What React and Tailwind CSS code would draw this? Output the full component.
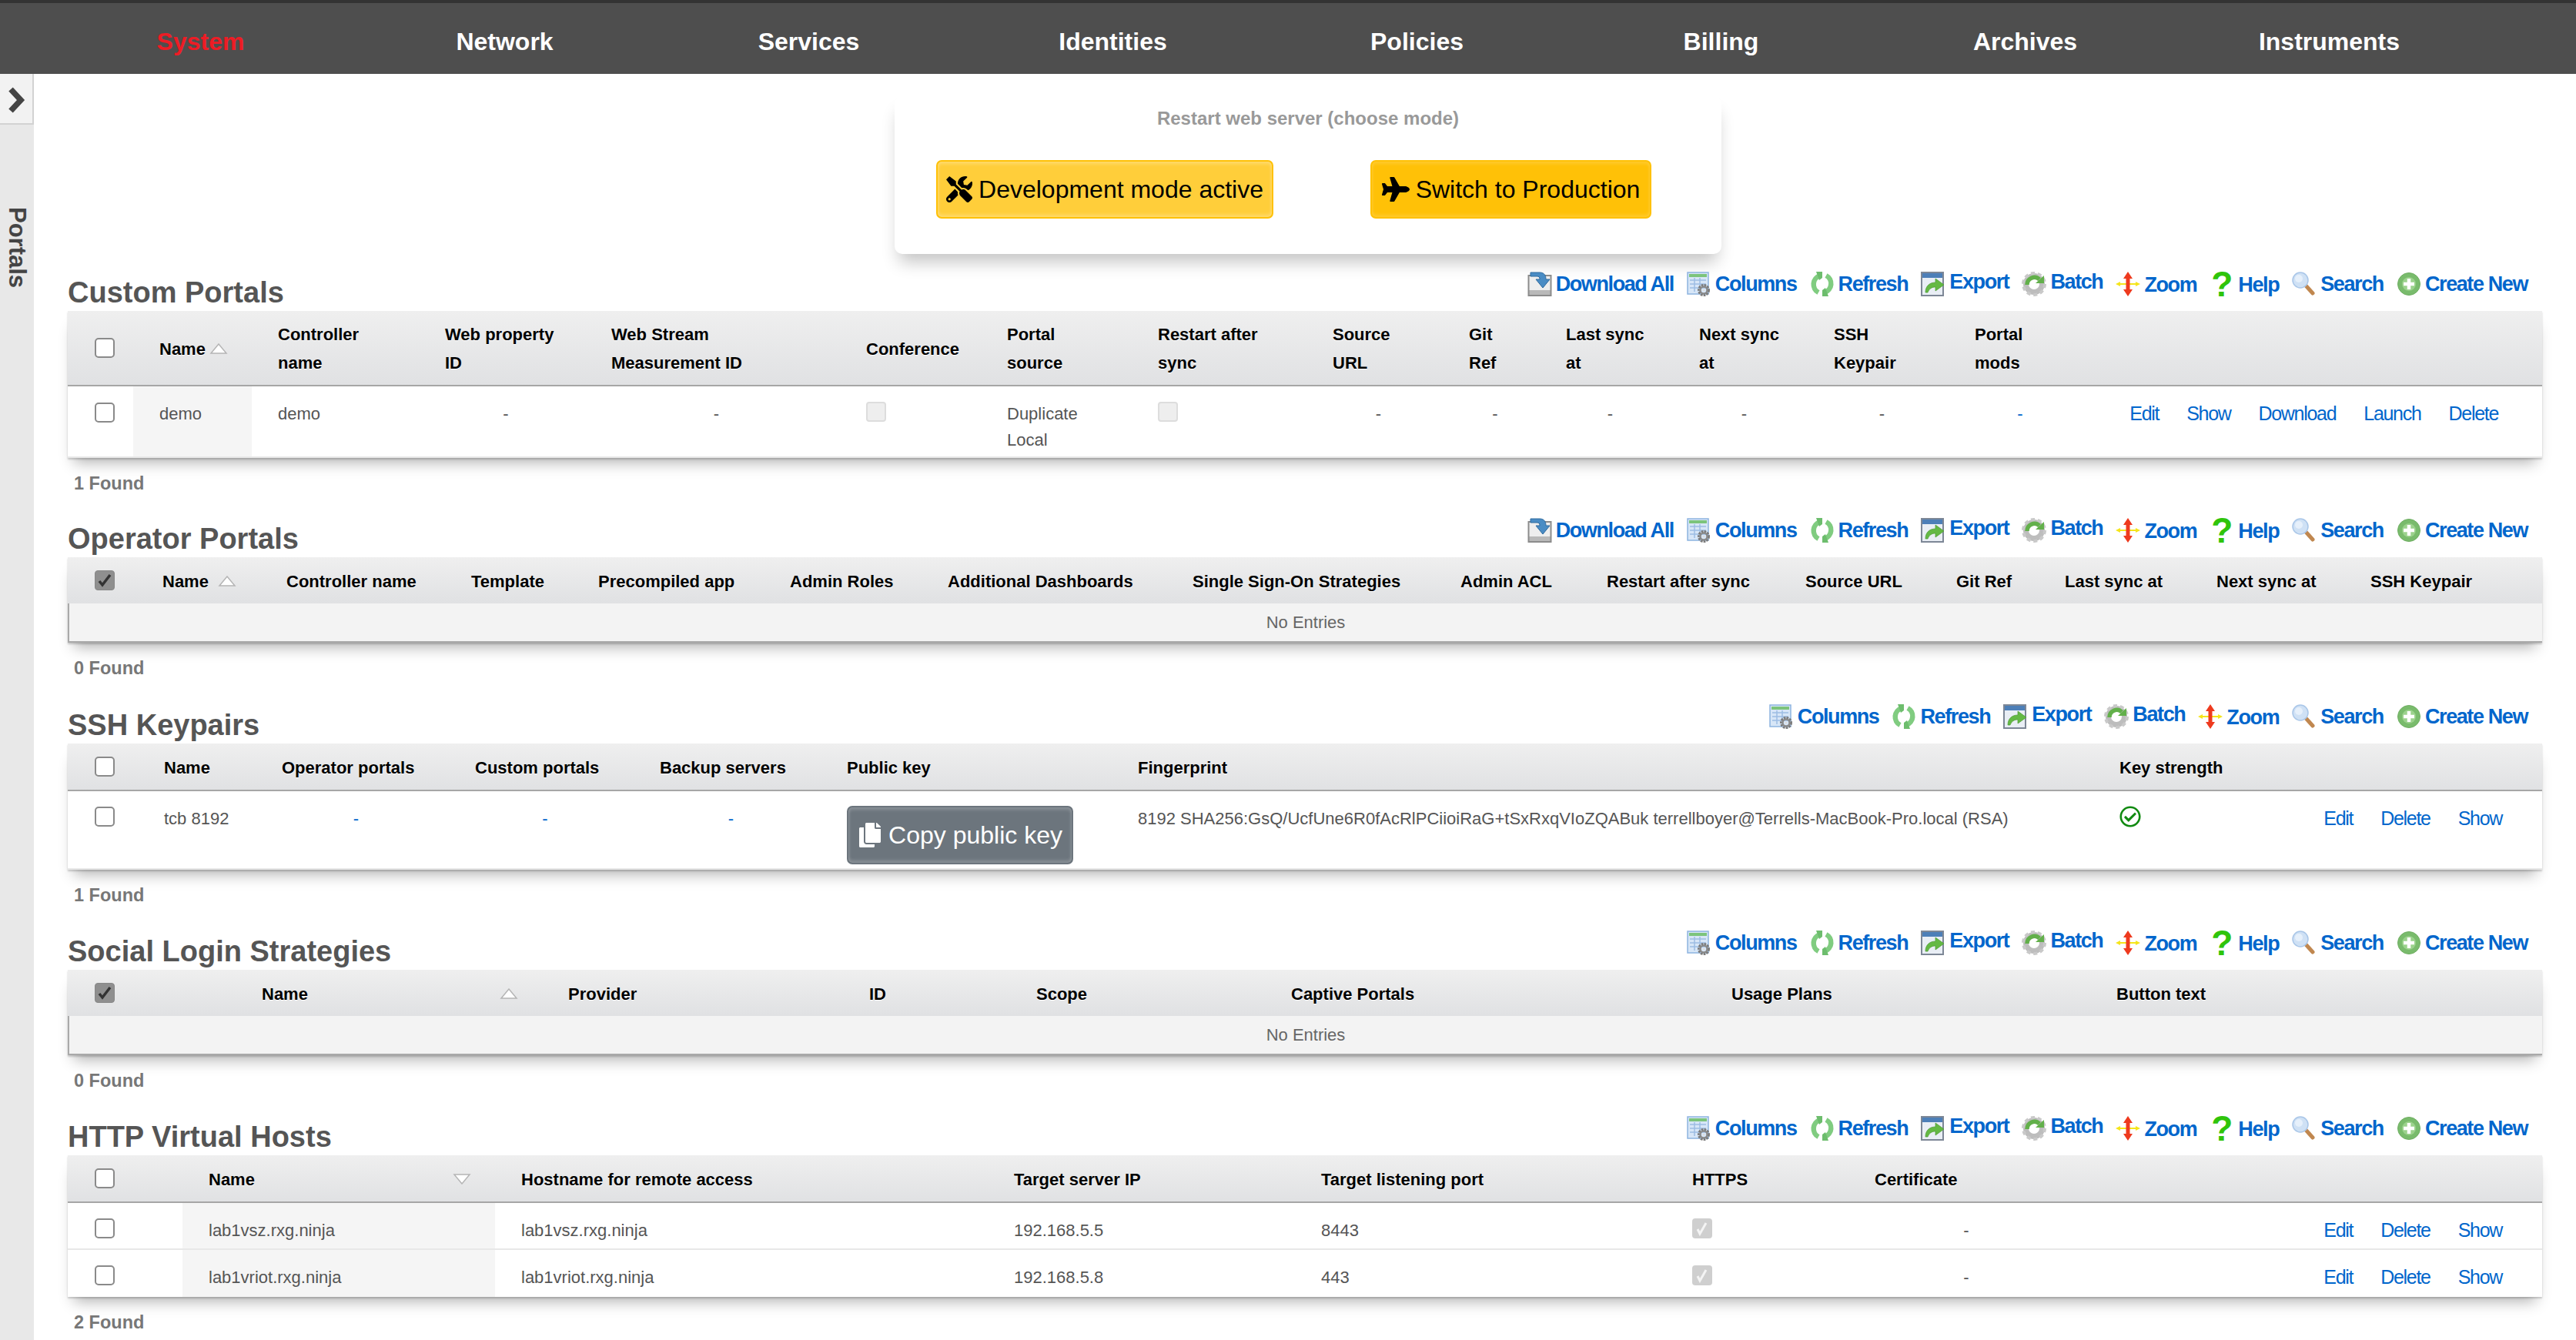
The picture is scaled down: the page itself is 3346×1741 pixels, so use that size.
import React from 'react';
import { FaTools, FaPlane, FaCopy, FaRegCheckCircle } from 'react-icons/fa';

const Svg = ({ children }) => (
  <svg viewBox="0 0 32 32" className="w-[32px] h-[32px] shrink-0 blur-[0.5px]">{children}</svg>
);

const icons = {
  download: (
    <Svg>
      <rect x="0.5" y="4" width="31" height="28" fill="#8c8c8c" />
      <rect x="2.5" y="6" width="27" height="18" fill="#eeeeee" />
      <rect x="2.5" y="24" width="27" height="6" fill="#b9b9b9" />
      <path d="M4 1h12c6 0 8 4 8 9h5l-9 11-9-11h5c0-3-1-4-4-4H4z" fill="#4a8cc4" stroke="#2f6a9e" strokeWidth="1" />
    </Svg>
  ),
  columns: (
    <Svg>
      <rect x="1" y="1" width="27" height="28" fill="#d7e6f7" stroke="#8db4e0" strokeWidth="1.5" />
      <rect x="3" y="3" width="23" height="4" fill="#7cc47c" />
      <path d="M4 11h21M4 16h21M4 21h21M10 8v18M17 8v18" stroke="#9dbde4" strokeWidth="1.5" />
      <circle cx="22" cy="24" r="6" fill="none" stroke="#7a7a7a" strokeWidth="4" strokeDasharray="2.5 1" />
      <circle cx="22" cy="24" r="4.5" fill="none" stroke="#8a8a8a" strokeWidth="2.5" />
      <circle cx="22" cy="24" r="1.5" fill="#dddddd" />
    </Svg>
  ),
  refresh: (
    <Svg>
      <path d="M13 5A12 12 0 0 0 11 27" fill="none" stroke="#80cc80" strokeWidth="6.500" />
      <path d="M19 27A12 12 0 0 0 21 5" fill="none" stroke="#80cc80" strokeWidth="6.500" />
      <path d="M8 0h8v8l-4 3z" fill="#6dbd6d" />
      <path d="M24 32h-8v-8l4-3z" fill="#6dbd6d" />
    </Svg>
  ),
  export: (
    <Svg>
      <rect x="1" y="1" width="28" height="30" fill="#e9eef5" stroke="#7d8796" strokeWidth="2" />
      <rect x="2" y="2" width="26" height="6" fill="#4d7fb8" />
      <path d="M6 27c0-9 6-13 13-13V9l11 8-11 8v-5c-5 0-8 2-10 7z" fill="#64b944" stroke="#4c9a32" strokeWidth="0.7" />
    </Svg>
  ),
  batch: (
    <Svg>
      <circle cx="16" cy="16" r="10.500" fill="none" stroke="#bdbdbd" strokeWidth="7" />
      <circle cx="16" cy="16" r="14" fill="none" stroke="#c9c9c9" strokeWidth="4" strokeDasharray="5 3.800" />
      <path d="M7 17A9.500 9.500 0 0 1 23 10" fill="none" stroke="#62b04a" strokeWidth="5.500" />
      <path d="M18 15h11V5z" fill="#62b04a" />
    </Svg>
  ),
  zoom: (
    <Svg>
      <path d="M0 16l6-3v2h20v-2l6 3-6 3v-2H6v2z" fill="#f5e51b" />
      <path d="M16 0l6 9h-3.500v14H22l-6 9-6-9h3.500V9H10z" fill="#ee3a1e" />
    </Svg>
  ),
  search: (
    <Svg>
      <path d="M18 18l9 10" stroke="#c0874f" strokeWidth="5" strokeLinecap="round" />
      <circle cx="11" cy="11" r="10" fill="#cfe1f5" stroke="#a9c6e8" strokeWidth="1.5" />
      <circle cx="9" cy="9" r="5" fill="#e6f0fb" />
    </Svg>
  ),
  create: (
    <Svg>
      <circle cx="16" cy="16" r="14.500" fill="#79bb6c" stroke="#6fae62" strokeWidth="1" />
      <circle cx="16" cy="16" r="9" fill="#9bd28c" />
      <path d="M16 9v14M9 16h14" stroke="#ffffff" strokeWidth="4.500" />
    </Svg>
  ),
  help: null,
};

const toolLabels = {
  download: 'Download All',
  columns: 'Columns',
  refresh: 'Refresh',
  export: 'Export',
  batch: 'Batch',
  zoom: 'Zoom',
  help: 'Help',
  search: 'Search',
  create: 'Create New',
};

const textShift = {
  export: 'mb-[5px]',
  batch: 'mb-[5px]',
  zoom: 'mt-[2px]',
  help: 'mt-[3px]',
};

function Toolbar({ items }) {
  return (
    <div className="flex items-center gap-[17px] pr-[19px] mb-[17px] text-[27px] font-bold tracking-[-1.4px] text-[#0066cc] leading-[32px]">
      {items.map((k) => (
        <span key={k} className="flex items-center gap-[5px] whitespace-nowrap">
          {k === 'help' ? (
            <span className="w-[32px] h-[32px] flex items-center justify-center text-[46px] leading-[32px] text-[#2fc40b] tracking-normal">?</span>
          ) : (
            icons[k]
          )}
          <span className={textShift[k] || ''}>{toolLabels[k]}</span>
        </span>
      ))}
    </div>
  );
}

const full = ['download', 'columns', 'refresh', 'export', 'batch', 'zoom', 'help', 'search', 'create'];
const noDownload = ['columns', 'refresh', 'export', 'batch', 'zoom', 'help', 'search', 'create'];
const sshTools = ['columns', 'refresh', 'export', 'batch', 'zoom', 'search', 'create'];

function Check({ kind }) {
  if (kind === 'checked') {
    return (
      <span className="flex items-center justify-center w-[26px] h-[26px] rounded-[4px] bg-[#8f8f8f] border border-[#888888]">
        <svg viewBox="0 0 20 20" className="w-[20px] h-[20px]">
          <path d="M3 11l4 5 10-13" fill="none" stroke="#333333" strokeWidth="3.500" />
        </svg>
      </span>
    );
  }
  if (kind === 'dis') {
    return <span className="block w-[26px] h-[26px] rounded-[4px] bg-[#eeeeee] border-2 border-[#dddddd]" />;
  }
  if (kind === 'disChecked') {
    return (
      <span className="flex items-center justify-center w-[26px] h-[26px] rounded-[4px] bg-[#cfcfcf]">
        <svg viewBox="0 0 20 20" className="w-[20px] h-[20px]">
          <path d="M4 11l3 6 8-14" fill="none" stroke="#f4f4f4" strokeWidth="3" />
        </svg>
      </span>
    );
  }
  return <span className="block w-[26px] h-[26px] rounded-[5px] bg-white border-2 border-[#8a8a8a]" />;
}

function Tri({ down }) {
  return (
    <svg viewBox="0 0 24 14" className="w-[24px] h-[14px] shrink-0">
      <path d={down ? 'M2 1h20L12 13z' : 'M12 1l10 12H2z'} fill="#ffffff" stroke="#b5b5b5" strokeWidth="1.500" />
    </svg>
  );
}

function Th({ children, sort, rule, first }) {
  const content = sort ? (
    <div className="flex items-center justify-between pr-[31px]">
      <span>{children}</span>
      <Tri down={sort === 'down'} />
    </div>
  ) : (
    children
  );
  return (
    <th
      className={
        'text-left align-middle font-bold text-[22px] leading-[37px] text-black [text-shadow:0_1px_0_#ffffff] ' +
        (first ? 'pl-[35px] ' : 'pl-[34px] pt-[2px] ') +
        (rule ? 'border-b-2 border-[#a6a6a6]' : '')
      }
    >
      {content}
    </th>
  );
}

function Td({ children, shade, dash, blue, first, line }) {
  return (
    <td
      className={
        'align-top pt-[19px] text-[22px] leading-[34px] ' +
        (blue ? 'text-[#0066cc] ' : 'text-[#555555] ') +
        (first ? 'pl-[35px] ' : 'pl-[34px] ') +
        (shade ? 'bg-[#f5f5f5] ' : '') +
        (dash ? 'text-center pr-[24px] ' : '') +
        (line ? 'border-b-2 border-[#e8e8e8] ' : '')
      }
    >
      {children}
    </td>
  );
}

function Actions({ items, line, wide }) {
  return (
    <td className={'align-top pt-[18px] ' + (line ? 'border-b-2 border-[#e8e8e8]' : '')}>
      <div className={'flex justify-end gap-[36px] text-[25px] leading-[34px] tracking-[-1.3px] text-[#0066cc] ' + (wide ? 'pr-[57px]' : 'pr-[52px]')}>
        {items.map((a) => (
          <span key={a}>{a}</span>
        ))}
      </div>
    </td>
  );
}

function Section({ title, tools, cols, head, children, foundText, foundH }) {
  return (
    <section>
      <div className="flex items-end justify-between h-[60px]">
        <h2 className="text-[38px] leading-[46px] font-bold text-[#555555] mb-[1px]">{title}</h2>
        <Toolbar items={tools} />
      </div>
      <div className="shadow-[0_2px_2px_rgba(0,0,0,0.18),0_14px_18px_-8px_rgba(0,0,0,0.3)]">
        <table className="w-full table-fixed border-separate border-spacing-0">
          <colgroup>
            {cols.map((c, i) => (
              <col key={i} className={c} />
            ))}
          </colgroup>
          <thead>
            <tr className={head.h + ' bg-linear-to-b from-[#efefef] to-[#e0e1e3]'}>{head.cells}</tr>
          </thead>
          <tbody className="bg-white">{children}</tbody>
        </table>
      </div>
      <div className={foundH + ' pl-[8px] pt-[16px] text-[23.500px] leading-[34px] font-bold text-[#777777]'}>{foundText}</div>
    </section>
  );
}

function Empty({ span }) {
  return (
    <tr className="h-[51px]">
      <td colSpan={span} className="bg-[#f3f3f3] border-l-2 border-b-2 border-[#a9a9a9] text-center text-[22px] text-[#666666] leading-[34px]">
        No Entries
      </td>
    </tr>
  );
}

const Dash = (p) => <Td dash {...p}>-</Td>;

export default function App() {
  return (
    <div className="w-[3346px] h-[1741px] overflow-hidden bg-white [font-family:'Liberation_Sans',Arial,sans-serif]">
      <nav className="flex h-[96px] pl-[63px] pt-[8px] items-center bg-[#4e4e4e] border-t-4 border-[#333333]">
        {['System', 'Network', 'Services', 'Identities', 'Policies', 'Billing', 'Archives', 'Instruments'].map((n, i) => (
          <span key={n} className={'w-[395px] text-center text-[32px] font-bold ' + (i === 0 ? 'text-[#ee1c25]' : 'text-white')}>
            {n}
          </span>
        ))}
      </nav>
      <div className="flex h-[1645px]">
        <aside className="w-[44px] shrink-0 bg-[#e8e8e8] flex flex-col items-center">
          <div className="w-full h-[66px] bg-[#f2f2f2] border-r-2 border-b-2 border-[#d2d2d2] flex items-center justify-center pt-[3px]">
            <svg viewBox="0 0 24 34" className="w-[24px] h-[34px]">
              <path d="M5 3l13 14L5 31" fill="none" stroke="#444444" strokeWidth="7.500" />
            </svg>
          </div>
          <span className="mt-[107px] [writing-mode:vertical-rl] text-[31px] leading-[40px] font-bold text-[#444444]">Portals</span>
        </aside>
        <main className="flex-1 pl-[44px] pr-[44px]">
          <div className="h-[248px] pt-[29px]">
            <div className="ml-[1074px] w-[1074px] h-[205px] bg-white rounded-[10px] shadow-[0_16px_22px_-6px_rgba(0,0,0,0.24)] flex flex-col items-center pt-[14px]">
              <div className="text-[24px] leading-[30px] font-bold text-[#999999]">Restart web server (choose mode)</div>
              <div className="mt-[39px] self-stretch flex pl-[54px] gap-[126px] text-[32px] text-black">
                <button className="h-[76px] w-[438px] flex items-center justify-center gap-[8px] rounded-[7px] border-2 border-[#ffc107] bg-[#ffce3a] shadow-[inset_0_3px_4px_rgba(255,255,255,0.25),inset_0_-3px_4px_rgba(255,255,255,0.25)] whitespace-nowrap">
                  <FaTools className="w-[34px] h-[34px]" />
                  Development mode active
                </button>
                <button className="h-[76px] w-[365px] flex items-center justify-center gap-[8px] rounded-[7px] border-2 border-[#ffc107] bg-[#ffc107] shadow-[inset_0_3px_4px_rgba(255,255,255,0.15),inset_0_-3px_4px_rgba(255,255,255,0.15)] whitespace-nowrap">
                  <FaPlane className="w-[36px] h-[36px]" />
                  Switch to Production
                </button>
              </div>
            </div>
          </div>

          <Section
            title="Custom Portals"
            tools={full}
            foundText="1 Found"
            foundH="h-[69px]"
            cols={['w-[85px]', 'w-[154px]', 'w-[217px]', 'w-[216px]', 'w-[331px]', 'w-[183px]', 'w-[196px]', 'w-[227px]', 'w-[177px]', 'w-[126px]', 'w-[173px]', 'w-[175px]', 'w-[183px]', 'w-[190px]', 'w-[581px]']}
            head={{
              h: 'h-[98px]',
              cells: (
                <>
                  <Th rule first><Check /></Th>
                  <Th rule sort="up">Name</Th>
                  <Th rule>Controller<br />name</Th>
                  <Th rule>Web property<br />ID</Th>
                  <Th rule>Web Stream<br />Measurement ID</Th>
                  <Th rule>Conference</Th>
                  <Th rule>Portal<br />source</Th>
                  <Th rule>Restart after<br />sync</Th>
                  <Th rule>Source<br />URL</Th>
                  <Th rule>Git<br />Ref</Th>
                  <Th rule>Last sync<br />at</Th>
                  <Th rule>Next sync<br />at</Th>
                  <Th rule>SSH<br />Keypair</Th>
                  <Th rule>Portal<br />mods</Th>
                  <Th rule />
                </>
              ),
            }}
          >
            <tr className="h-[93px]">
              <Td first line><span className="block mt-[2px]"><Check /></span></Td>
              <Td shade line>demo</Td>
              <Td line>demo</Td>
              <Dash line />
              <Dash line />
              <Td line><span className="block mt-[1px]"><Check kind="dis" /></span></Td>
              <Td line>Duplicate<br />Local</Td>
              <Td line><span className="block mt-[1px]"><Check kind="dis" /></span></Td>
              <Dash line />
              <Dash line />
              <Dash line />
              <Dash line />
              <Dash line />
              <td className="align-top pt-[19px] pl-[34px] pr-[38px] text-center text-[22px] leading-[34px] text-[#0066cc] border-b-2 border-[#e8e8e8]">-</td>
              <Actions line wide items={['Edit', 'Show', 'Download', 'Launch', 'Delete']} />
            </tr>
          </Section>

          <Section
            title="Operator Portals"
            tools={full}
            foundText="0 Found"
            foundH="h-[71px]"
            cols={['w-[89px]', 'w-[161px]', 'w-[240px]', 'w-[165px]', 'w-[249px]', 'w-[205px]', 'w-[318px]', 'w-[348px]', 'w-[190px]', 'w-[258px]', 'w-[196px]', 'w-[141px]', 'w-[197px]', 'w-[200px]', 'w-[257px]']}
            head={{
              h: 'h-[60px]',
              cells: (
                <>
                  <Th first><Check kind="checked" /></Th>
                  <Th sort="up">Name</Th>
                  <Th>Controller name</Th>
                  <Th>Template</Th>
                  <Th>Precompiled app</Th>
                  <Th>Admin Roles</Th>
                  <Th>Additional Dashboards</Th>
                  <Th>Single Sign-On Strategies</Th>
                  <Th>Admin ACL</Th>
                  <Th>Restart after sync</Th>
                  <Th>Source URL</Th>
                  <Th>Git Ref</Th>
                  <Th>Last sync at</Th>
                  <Th>Next sync at</Th>
                  <Th>SSH Keypair</Th>
                </>
              ),
            }}
          >
            <Empty span={15} />
          </Section>

          <Section
            title="SSH Keypairs"
            tools={sshTools}
            foundText="1 Found"
            foundH="h-[70px]"
            cols={['w-[91px]', 'w-[153px]', 'w-[251px]', 'w-[240px]', 'w-[243px]', 'w-[378px]', 'w-[1275px]', 'w-[241px]', 'w-[342px]']}
            head={{
              h: 'h-[62px]',
              cells: (
                <>
                  <Th rule first><Check /></Th>
                  <Th rule>Name</Th>
                  <Th rule>Operator portals</Th>
                  <Th rule>Custom portals</Th>
                  <Th rule>Backup servers</Th>
                  <Th rule>Public key</Th>
                  <Th rule>Fingerprint</Th>
                  <Th rule>Key strength</Th>
                  <Th rule />
                </>
              ),
            }}
          >
            <tr className="h-[102px]">
              <Td first line><span className="block mt-[1px]"><Check /></span></Td>
              <Td line>tcb 8192</Td>
              <Dash line blue />
              <Dash line blue />
              <Dash line blue />
              <Td line>
                <button className="flex items-center gap-[8px] h-[76px] w-[294px] justify-center rounded-[7px] border-2 border-[#6c757d] bg-[#6c757d] text-white text-[32px] shadow-[inset_0_3px_4px_rgba(255,255,255,0.2),inset_0_-3px_4px_rgba(255,255,255,0.2)] whitespace-nowrap">
                  <FaCopy className="w-[32px] h-[32px]" />
                  Copy public key
                </button>
              </Td>
              <Td line>8192 SHA256:GsQ/UcfUne6R0fAcRlPCiioiRaG+tSxRxqVIoZQABuk terrellboyer@Terrells-MacBook-Pro.local (RSA)</Td>
              <Td line><FaRegCheckCircle className="w-[28px] h-[28px] text-[#118a11]" /></Td>
              <Actions line items={['Edit', 'Delete', 'Show']} />
            </tr>
          </Section>

          <Section
            title="Social Login Strategies"
            tools={noDownload}
            foundText="0 Found"
            foundH="h-[70px]"
            cols={['w-[218px]', 'w-[398px]', 'w-[391px]', 'w-[217px]', 'w-[331px]', 'w-[572px]', 'w-[500px]', 'w-[587px]']}
            head={{
              h: 'h-[60px]',
              cells: (
                <>
                  <Th first><Check kind="checked" /></Th>
                  <Th sort="up">Name</Th>
                  <Th>Provider</Th>
                  <Th>ID</Th>
                  <Th>Scope</Th>
                  <Th>Captive Portals</Th>
                  <Th>Usage Plans</Th>
                  <Th>Button text</Th>
                </>
              ),
            }}
          >
            <Empty span={8} />
          </Section>

          <Section
            title="HTTP Virtual Hosts"
            tools={noDownload}
            foundText="2 Found"
            foundH="h-[57px]"
            cols={['w-[149px]', 'w-[406px]', 'w-[640px]', 'w-[399px]', 'w-[482px]', 'w-[237px]', 'w-[296px]', 'w-[605px]']}
            head={{
              h: 'h-[62px]',
              cells: (
                <>
                  <Th rule first><Check /></Th>
                  <Th rule sort="down">Name</Th>
                  <Th rule>Hostname for remote access</Th>
                  <Th rule>Target server IP</Th>
                  <Th rule>Target listening port</Th>
                  <Th rule>HTTPS</Th>
                  <Th rule>Certificate</Th>
                  <Th rule />
                </>
              ),
            }}
          >
            {[
              ['lab1vsz.rxg.ninja', '192.168.5.5', '8443'],
              ['lab1vriot.rxg.ninja', '192.168.5.8', '443'],
            ].map(([host, ip, port], i) => (
              <tr key={host} className="h-[61px]">
                <Td first line={i === 0}><span className="block mt-[1px]"><Check /></span></Td>
                <Td shade line={i === 0}>{host}</Td>
                <Td line={i === 0}>{host}</Td>
                <Td line={i === 0}>{ip}</Td>
                <Td line={i === 0}>{port}</Td>
                <Td line={i === 0}><span className="block mt-[1px]"><Check kind="disChecked" /></span></Td>
                <Dash line={i === 0} />
                <Actions line={i === 0} items={['Edit', 'Delete', 'Show']} />
              </tr>
            ))}
          </Section>
        </main>
      </div>
    </div>
  );
}
